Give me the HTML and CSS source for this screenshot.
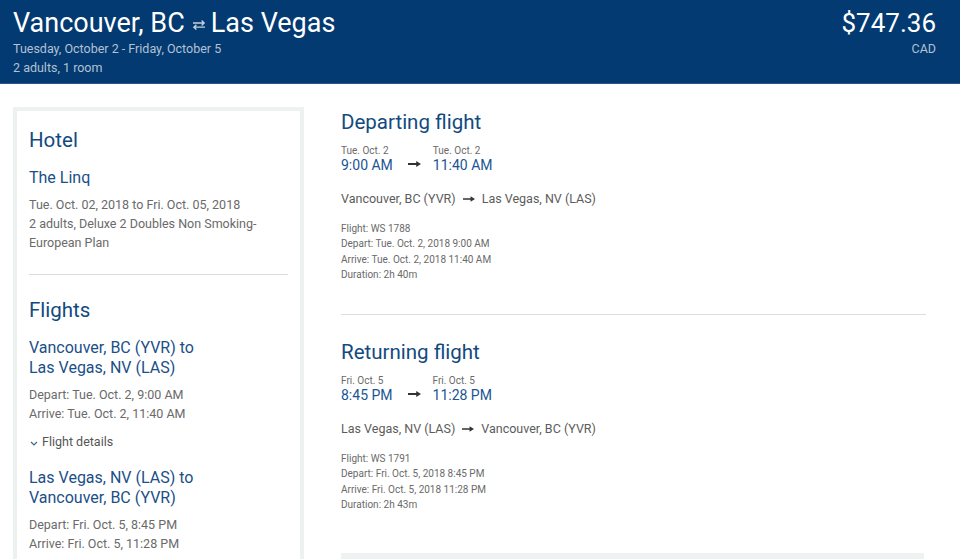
FILE: index.html
```html
<!DOCTYPE html>
<html lang="en">
<head>
<meta charset="utf-8">
<title>Trip summary</title>
<link rel="stylesheet" href="styles.css">
</head>
<body>
<header class="topbar">
  <div class="trip">
    <h1 class="trip-title">Vancouver, BC<svg class="swap" viewBox="0 0 14 10" width="14" height="10"><path d="M1 3H12.4M9.6 0.6L12.2 3L9.6 5.4M13 7.2H1.6M4.4 4.8L1.8 7.2L4.4 9.6" fill="none" stroke="#c6d1de" stroke-width="1.3"/></svg>Las Vegas</h1>
    <div class="trip-sub">Tuesday, October 2 - Friday, October 5</div>
    <div class="trip-sub">2 adults, 1 room</div>
  </div>
  <div class="price">
    <div class="price-amount">$747.36</div>
    <div class="price-cur">CAD</div>
  </div>
</header>

<main class="main">
  <aside class="card">
    <h2 class="card-heading">Hotel</h2>
    <div class="card-name">The Linq</div>
    <div class="card-text">
      <div>Tue. Oct. 02, 2018 to Fri. Oct. 05, 2018</div>
      <div>2 adults, Deluxe 2 Doubles Non Smoking-European Plan</div>
    </div>
    <hr class="card-rule">
    <h2 class="card-heading card-heading-flights">Flights</h2>
    <div class="card-route">Vancouver, BC (YVR) to<br>Las Vegas, NV (LAS)</div>
    <div class="card-text">
      <div>Depart: Tue. Oct. 2, 9:00 AM</div>
      <div>Arrive: Tue. Oct. 2, 11:40 AM</div>
    </div>
    <div class="toggle"><svg class="chev" viewBox="0 0 8 5" width="8" height="5"><path d="M1 1L4 4L7 1" fill="none" stroke="#3a6898" stroke-width="1.2"/></svg>Flight details</div>
    <div class="card-route card-route-second">Las Vegas, NV (LAS) to<br>Vancouver, BC (YVR)</div>
    <div class="card-text">
      <div>Depart: Fri. Oct. 5, 8:45 PM</div>
      <div>Arrive: Fri. Oct. 5, 11:28 PM</div>
    </div>
  </aside>

  <section class="flights">
    <div class="leg">
      <h2 class="leg-heading">Departing flight</h2>
      <div class="times">
        <div class="time-col">
          <div class="time-date">Tue. Oct. 2</div>
          <div class="time-val">9:00 AM</div>
        </div>
        <svg class="arrow arrow-time" viewBox="0 0 13 6" width="13" height="6"><path d="M0 2.1H8.2V0L13 3L8.2 6V3.9H0Z" fill="#333"/></svg>
        <div class="time-col">
          <div class="time-date">Tue. Oct. 2</div>
          <div class="time-val">11:40 AM</div>
        </div>
      </div>
      <div class="route">Vancouver, BC (YVR)<svg class="arrow arrow-route" viewBox="0 0 13 6" width="12" height="6"><path d="M0 2.1H8.2V0L13 3L8.2 6V3.9H0Z" fill="#333"/></svg>Las Vegas, NV (LAS)</div>
      <div class="details">
        <div>Flight: WS 1788</div>
        <div>Depart: Tue. Oct. 2, 2018 9:00 AM</div>
        <div>Arrive: Tue. Oct. 2, 2018 11:40 AM</div>
        <div>Duration: 2h 40m</div>
      </div>
    </div>
    <hr class="leg-rule">
    <div class="leg">
      <h2 class="leg-heading">Returning flight</h2>
      <div class="times">
        <div class="time-col">
          <div class="time-date">Fri. Oct. 5</div>
          <div class="time-val">8:45 PM</div>
        </div>
        <svg class="arrow arrow-time" viewBox="0 0 13 6" width="13" height="6"><path d="M0 2.1H8.2V0L13 3L8.2 6V3.9H0Z" fill="#333"/></svg>
        <div class="time-col">
          <div class="time-date">Fri. Oct. 5</div>
          <div class="time-val">11:28 PM</div>
        </div>
      </div>
      <div class="route">Las Vegas, NV (LAS)<svg class="arrow arrow-route" viewBox="0 0 13 6" width="12" height="6"><path d="M0 2.1H8.2V0L13 3L8.2 6V3.9H0Z" fill="#333"/></svg>Vancouver, BC (YVR)</div>
      <div class="details">
        <div>Flight: WS 1791</div>
        <div>Depart: Fri. Oct. 5, 2018 8:45 PM</div>
        <div>Arrive: Fri. Oct. 5, 2018 11:28 PM</div>
        <div>Duration: 2h 43m</div>
      </div>
    </div>
    <div class="summary-box"></div>
  </section>
</main>
</body>
</html>
```

FILE: styles.css
```css
html {
  overflow: hidden;
}

body {
  margin: 0;
  font-family: Roboto, "Liberation Sans", Arial, sans-serif;
  background: #ffffff;
  color: #666666;
}

.topbar {
  display: flex;
  justify-content: space-between;
  align-items: flex-start;
  height: 84px;
  box-sizing: border-box;
  padding: 8px 24px 0 13px;
  background: #033a71;
  border-bottom: 1px solid #2d5785;
}

.trip-title {
  margin: 0;
  font-size: 27px;
  line-height: 31px;
  font-weight: 400;
  color: #ffffff;
  display: flex;
  align-items: center;
}

.swap {
  margin: 2px 5px 0 7px;
}

.trip-sub {
  font-size: 12.5px;
  line-height: 19px;
  color: #b3c1d3;
}

.price {
  text-align: right;
}

.price-amount {
  font-size: 26px;
  line-height: 31px;
  color: #ffffff;
}

.price-cur {
  font-size: 12.5px;
  line-height: 19px;
  color: #b3c1d3;
}

.main {
  display: flex;
  align-items: flex-start;
  gap: 37px;
  padding: 23px 34px 0 13px;
}

.card {
  flex: 0 0 291px;
  box-sizing: border-box;
  border: 4px solid #edf1f1;
  padding: 17px 12px 60px;
}

.card-heading {
  margin: 0;
  font-size: 20.5px;
  line-height: 24px;
  font-weight: 400;
  color: #124a80;
}

.card-heading-flights {
  margin-top: 23px;
}

.card-name {
  margin-top: 16px;
  font-size: 16px;
  line-height: 20px;
  color: #1b4f87;
}

.card-text {
  margin-top: 7px;
  font-size: 12.5px;
  line-height: 19px;
  color: #6a6a6a;
}

.card-rule {
  margin: 22px 0 0;
  border: 0;
  border-top: 1px solid #d9dcdc;
}

.card-route {
  margin-top: 16px;
  font-size: 16px;
  line-height: 20px;
  color: #1b4f87;
}

.card-route-second {
  margin-top: 17px;
}

.toggle {
  margin-top: 9px;
  display: flex;
  align-items: center;
  font-size: 12.5px;
  line-height: 19px;
  color: #555555;
}

.chev {
  margin: 3px 4px 0 1px;
}

.flights {
  flex: 1;
  min-width: 0;
  padding-top: 3px;
}

.leg-heading {
  margin: 0;
  font-size: 20.5px;
  line-height: 24px;
  font-weight: 400;
  color: #124a80;
}

.times {
  margin-top: 10px;
  display: flex;
  align-items: flex-start;
}

.time-date {
  font-size: 10px;
  line-height: 13px;
  color: #6a6a6a;
}

.time-val {
  font-size: 14px;
  line-height: 17px;
  color: #1a5593;
}

.arrow-time {
  margin: 17px 12px 0 15px;
}

.route {
  margin-top: 16px;
  display: flex;
  align-items: center;
  font-size: 12.5px;
  line-height: 18px;
  color: #5c5c5c;
}

.arrow-route {
  margin: 0 7px 0 7px;
}

.details {
  margin-top: 13px;
  font-size: 10px;
  line-height: 15.3px;
  color: #6a6a6a;
}

.leg-rule {
  margin: 32px 0 0;
  border: 0;
  border-top: 1px solid #dcdfdf;
}

.leg-rule + .leg {
  margin-top: 25px;
}

.summary-box {
  margin-top: 41px;
  margin-right: 2px;
  height: 90px;
  background: #eef2f2;
}
```
